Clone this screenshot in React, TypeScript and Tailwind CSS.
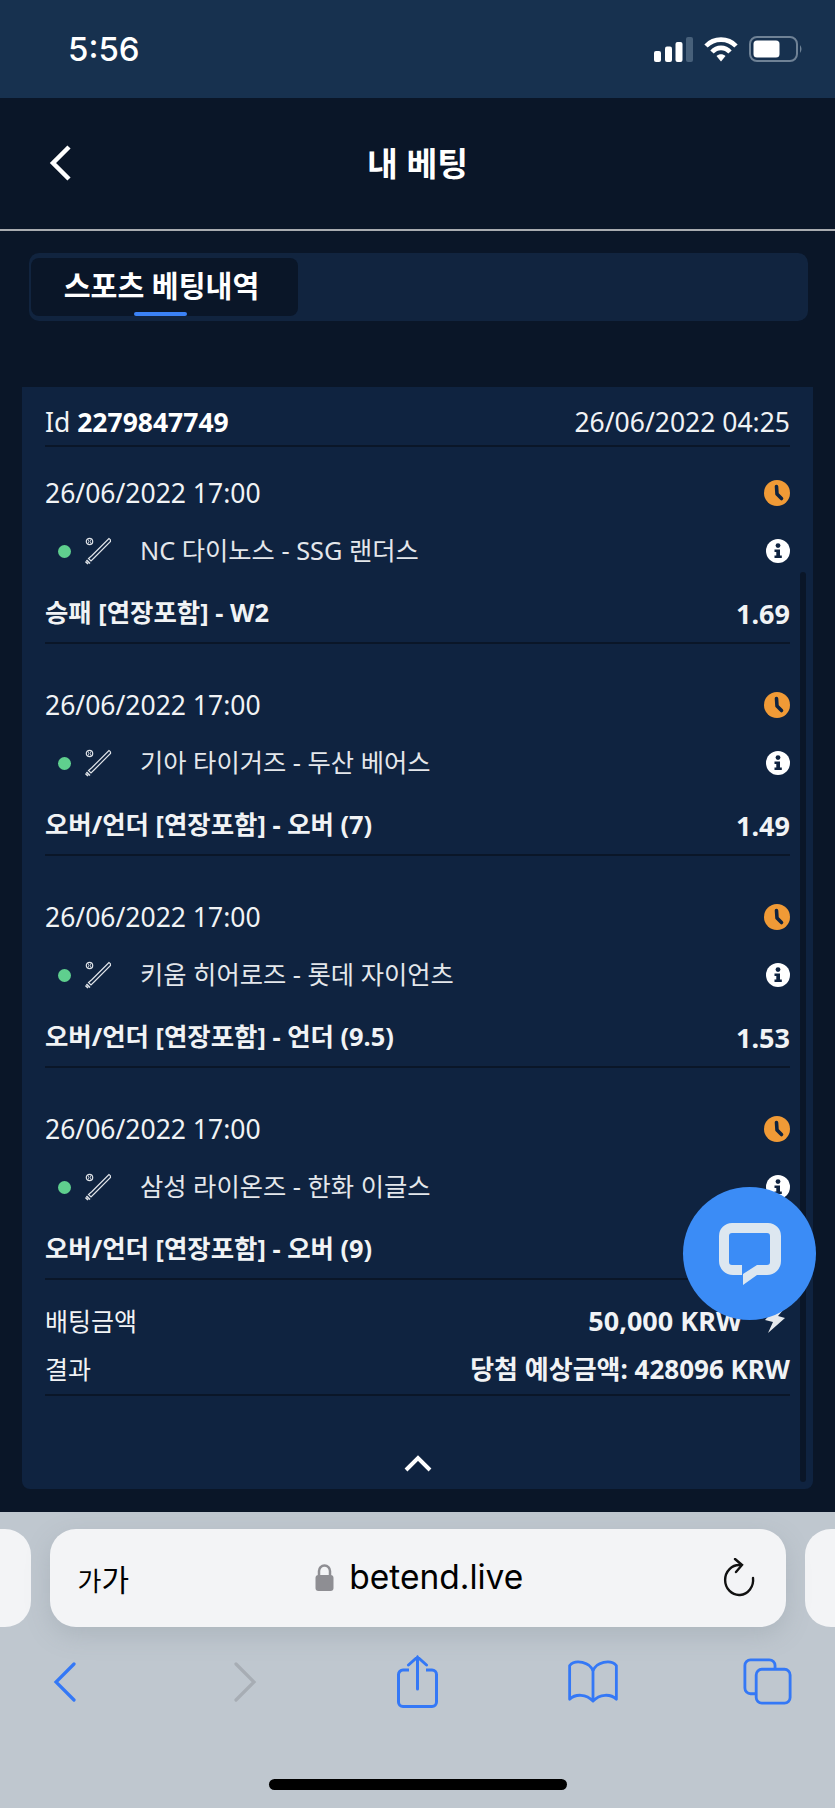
import React from "react";

const bets = [
  { team: "NC 다이노스 - SSG 랜더스", market: "승패 [연장포함] - W2", odd: "1.69" },
  { team: "기아 타이거즈 - 두산 베어스", market: "오버/언더 [연장포함] - 오버 (7)", odd: "1.49" },
  { team: "키움 히어로즈 - 롯데 자이언츠", market: "오버/언더 [연장포함] - 언더 (9.5)", odd: "1.53" },
  { team: "삼성 라이온즈 - 한화 이글스", market: "오버/언더 [연장포함] - 오버 (9)", odd: "" },
];

function Clock() {
  return (
    <svg width="26" height="26" viewBox="0 0 26 26" fill="none" className="block">
      <circle cx="13" cy="13" r="13" fill="#f09a36" />
      <path d="M12.5 6.5 L13 14 L17.5 18.5" stroke="#0f2340" strokeWidth="3.6" strokeLinecap="round" strokeLinejoin="round" />
    </svg>
  );
}
function Info() {
  return (
    <svg width="24" height="24" viewBox="0 0 24 24" className="block">
      <circle cx="12" cy="12" r="12" fill="#fff" />
      <circle cx="12" cy="6.6" r="2.4" fill="#0f2340" />
      <path d="M8.5 10.5 H14 V16.5 H15.8 V19 H8.5 V16.5 H10.3 V13 H8.5 Z" fill="#0f2340" />
    </svg>
  );
}
function Bat() {
  return (
    <svg width="28" height="28" viewBox="0 0 28 28" fill="none" stroke="#dfe3e8" strokeWidth="1.2" className="block">
      <circle cx="5.5" cy="4.5" r="3.2" />
      <path d="M4.2 2.5 Q5.5 4.5 4.2 6.5 M6.8 2.5 Q5.5 4.5 6.8 6.5" strokeWidth="0.8" />
      <path d="M25 1.5 Q27 2.5 26.5 4.5 L10 21 L7 24 L4.5 21.5 L8 18.5 Z" />
      <path d="M1.5 24.5 L4 27 M2.5 23 L6 26.5" strokeWidth="1.6" />
    </svg>
  );
}

function Bet({ b, last }: { b: (typeof bets)[number]; last: boolean }) {
  return (
    <div className={`border-b-2 border-[#0a1628] ${last ? "" : "mb-[32px]"}`}>
      <div className="flex h-[58px] items-center justify-between">
        <span className="text-[26.5px]">26/06/2022 17:00</span>
        <Clock />
      </div>
      <div className="flex h-[58px] items-center justify-between">
        <div className="flex items-center">
          <span className="ml-[13px] h-[13px] w-[13px] rounded-full bg-[#5fcf8e]" />
          <span className="ml-[13px] w-[47px]"><Bat /></span>
          <span className="ml-[9px] text-[25.3px] text-[#e4e7eb]">{b.team}</span>
        </div>
        <Info />
      </div>
      <div className="flex h-[62px] items-center justify-between pt-[4px] font-bold">
        <span className="text-[25.4px]">{b.market}</span>
        <span className="text-[27px]">{b.odd}</span>
      </div>
    </div>
  );
}

export default function App() {
  return (
    <div className="relative flex h-[1808px] w-[835px] flex-col overflow-hidden bg-[#0a1628] text-white" style={{ fontFamily: '"Noto Sans","Noto Sans CJK KR",sans-serif' }}>
      {/* iOS status bar */}
      <div className="flex h-[98px] shrink-0 items-center justify-between bg-[#17314f] pl-[68px] pr-[32px]">
        <span className="text-[33px] font-medium leading-none" style={{ fontFamily: 'Inter,sans-serif' }}>5:56</span>
        <div className="flex items-center gap-[11px]">
          <svg width="40" height="25" viewBox="0 0 40 25" className="block">
            <rect x="1" y="14" width="7" height="11" rx="2" fill="#fff" />
            <rect x="12" y="9.5" width="7" height="15.5" rx="2" fill="#fff" />
            <rect x="22.5" y="5" width="7" height="20" rx="2" fill="#fff" />
            <rect x="33" y="0" width="7" height="25" rx="2" fill="#47607a" />
          </svg>
          <svg width="34" height="26" viewBox="0 0 34 26" fill="none" className="block">
            <path d="M2 10 C10 1.5 24 1.5 32 10" stroke="#fff" strokeWidth="4.6" />
            <path d="M8 16 C13 10.5 21 10.5 26 16" stroke="#fff" strokeWidth="4.6" />
            <path d="M12.5 20 C15 17.6 19 17.6 21.5 20 L17 25.5 Z" fill="#fff" />
          </svg>
          <svg width="54" height="26" viewBox="0 0 54 26" fill="none" className="block">
            <rect x="1" y="1" width="47" height="24" rx="7" stroke="#6f8296" strokeWidth="2" />
            <rect x="4.5" y="4.5" width="26" height="17" rx="3.5" fill="#fff" />
            <path d="M51 9 Q54 13 51 17 Z" fill="#6f8296" />
          </svg>
        </div>
      </div>

      {/* Header */}
      <div className="relative flex h-[133px] shrink-0 items-center justify-center border-b-2 border-[#a9acb0]">
        <svg width="24" height="36" viewBox="0 0 24 36" fill="none" className="absolute left-[49px] top-[47px]">
          <path d="M20 2 L4 18 L20 34" stroke="#fff" strokeWidth="4.5" />
        </svg>
        <span className="text-[33.5px] font-semibold leading-none">내 베팅</span>
      </div>

      {/* Tabs */}
      <div className="ml-[29px] mr-[27px] mt-[22px] h-[68px] shrink-0 rounded-[10px] bg-[#11243f] p-[5px] pl-[2px]">
        <div className="relative flex h-[58px] w-[267px] items-center justify-center rounded-[8px] bg-[#0a1628] text-[29.2px] font-semibold leading-none">
          <span className="-ml-[6px]">스포츠 베팅내역</span>
          <span className="absolute bottom-0 left-[103px] h-[4px] w-[53px] rounded-[2px] bg-[#3b82f6]" />
        </div>
      </div>

      {/* Card */}
      <div className="relative mx-[22px] mt-[66px] h-[1102px] shrink-0 rounded-b-[8px] bg-[#0f2340] px-[23px] text-[26.5px] leading-none text-[#f1f3f5]">
        <div className="flex h-[60px] items-center justify-between border-b-2 border-[#0a1628] pt-[13px]">
          <span>Id <b className="font-bold text-white">2279847749</b></span>
          <span>26/06/2022 04:25</span>
        </div>
        <div className="pt-[17px]">
          {bets.map((b, i) => (
            <Bet key={i} b={b} last={i === bets.length - 1} />
          ))}
        </div>
        <div className="flex h-[54px] items-end justify-between">
          <span className="text-[25px]">배팅금액</span>
          <span className="flex items-center text-[27px] font-bold">
            50,000 KRW
            <svg width="20" height="24" viewBox="0 0 20 24" className="ml-[23px] mr-[5px] block">
              <path d="M10 0 L19 0 L13 7 L20 9 L3 24 L8 13 L0 11 Z" fill="#e6e9ec" />
            </svg>
          </span>
        </div>
        <div className="flex h-[48px] items-end justify-between">
          <span className="text-[25px]">결과</span>
          <span className="text-[26px] font-bold">당첨 예상금액: 428096 KRW</span>
        </div>
        <div className="mt-[12px] border-b-2 border-[#0a1628]" />
        <div className="mt-[58px] flex justify-center">
          <svg width="28" height="18" viewBox="0 0 28 18" fill="none" className="block">
            <path d="M2 16 L14 4 L26 16" stroke="#fff" strokeWidth="4" />
          </svg>
        </div>
        <div className="absolute bottom-[7px] right-[7px] h-[910px] w-[6px] rounded-full bg-[#0a1628]" />
      </div>

      {/* Safari chrome */}
      <div className="mt-[23px] flex min-h-0 flex-1 flex-col bg-[#bfc7cf]">
        <div className="mt-[17px] flex h-[98px] shrink-0 justify-center gap-[19px]">
          <div className="-ml-[30px] w-[60px] rounded-r-[26px] bg-[#f3f4f6]" />
          <div className="relative flex w-[736px] items-center justify-between rounded-[26px] bg-[#f3f4f6] pl-[28px] pr-[30px] text-black shadow-[0_8px_24px_rgba(120,130,140,0.25)]">
            <span className="text-[30px] leading-none" style={{ fontFamily: '"Noto Sans CJK KR",sans-serif' }}><span className="text-[26px]">가</span>가</span>
            <div className="mr-[12px] flex items-center gap-[15px]">
              <svg width="19" height="28" viewBox="0 0 19 28" fill="none" className="block">
                <path d="M4 13 V7 A5.5 5.5 0 0 1 15 7 V13" stroke="#8e8e93" strokeWidth="2.5" />
                <rect x="0.5" y="11" width="18" height="16" rx="3" fill="#8e8e93" />
              </svg>
              <span className="text-[33.5px] leading-none" style={{ fontFamily: 'Inter,sans-serif' }}>betend.live</span>
            </div>
            <svg width="34" height="40" viewBox="0 0 34 40" fill="none" className="block">
              <path d="M18 7 A14 15 0 1 0 31 20" stroke="#111" strokeWidth="2.4" strokeLinecap="round" />
              <path d="M13 1 L20 7 L14 14" stroke="#111" strokeWidth="2.4" strokeLinecap="round" />
            </svg>
          </div>
          <div className="-mr-[30px] w-[60px] rounded-l-[26px] bg-[#f3f4f6]" />
        </div>

        <div className="mt-[28px] flex items-center pl-[53px]">
          <svg width="23" height="40" viewBox="0 0 23 40" fill="none" className="block">
            <path d="M21 2 L3 20 L21 38" stroke="#3478f6" strokeWidth="3.2" strokeLinecap="round" />
          </svg>
          <svg width="24" height="40" viewBox="0 0 24 40" fill="none" className="ml-[157px] block">
            <path d="M3 2 L21 20 L3 38" stroke="#a7adb4" strokeWidth="3.2" strokeLinecap="round" />
          </svg>
          <svg width="41" height="53" viewBox="0 0 41 53" fill="none" className="ml-[140px] block">
            <path d="M12 15 H6 A4.5 4.5 0 0 0 1.5 19.5 V47 A4.5 4.5 0 0 0 6 51.5 H35 A4.5 4.5 0 0 0 39.5 47 V19.5 A4.5 4.5 0 0 0 35 15 H29" stroke="#3478f6" strokeWidth="3" />
            <path d="M20.5 34 V2 M11.5 10 L20.5 2 L29.5 10" stroke="#3478f6" strokeWidth="3" strokeLinecap="round" />
          </svg>
          <svg width="52" height="43" viewBox="0 0 54 46" fill="none" className="ml-[129px] block">
            <path d="M27 12 C24 2 8 -1 2 6 V42 C8 36 20 36 27 44 C34 36 46 36 52 42 V6 C46 -1 30 2 27 12 Z M27 12 V44" stroke="#3478f6" strokeWidth="3" strokeLinejoin="round" />
          </svg>
          <svg width="49" height="49" viewBox="0 0 52 50" fill="none" className="ml-[124px] block">
            <rect x="14" y="12" width="36" height="36" rx="6" stroke="#3478f6" strokeWidth="3" />
            <path d="M14 38 H8 A6 6 0 0 1 2 32 V8 A6 6 0 0 1 8 2 H28 A6 6 0 0 1 34 8 V12" stroke="#3478f6" strokeWidth="3" />
          </svg>
        </div>
        <div className="mb-[18px] mt-auto h-[11px] w-[298px] self-center rounded-full bg-black" />
      </div>

      {/* Chat bubble */}
      <div className="absolute left-[683px] top-[1187px] flex h-[133px] w-[133px] items-center justify-center rounded-full bg-[#3b8cf6]">
        <svg width="62" height="62" viewBox="0 0 62 62" className="block">
          <path fill="#dde7f0" d="M23 52 H14 A14 14 0 0 1 0 38 V13 A13 13 0 0 1 13 0 H49 A13 13 0 0 1 62 13 V38 A14 14 0 0 1 48 52 H38 L24 62 V51 L38 42 H48 A3 3 0 0 0 51 39 V13 A3 3 0 0 0 48 10 H13 A3 3 0 0 0 10 13 V39 A3 3 0 0 0 13 42 H23 Z" />
        </svg>
      </div>
    </div>
  );
}
